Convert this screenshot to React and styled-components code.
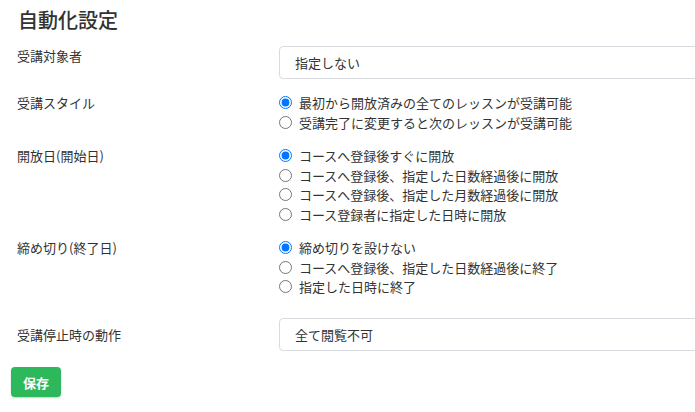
import React, { useState } from "react";
import styled, { createGlobalStyle } from "styled-components";

const GlobalStyle = createGlobalStyle`
  body {
    margin: 0;
    background: #ffffff;
    font-family: "Noto Sans CJK JP", "Noto Sans", sans-serif;
    color: #333333;
    overflow: hidden;
  }
`;

const Page = styled.div`
  box-sizing: border-box;
  width: 100vw;
  overflow: hidden;
  padding: 8px 0 16px 11px;
`;

const Title = styled.h2`
  margin: 0 0 14px 7px;
  font-size: 20px;
  line-height: 24px;
  font-weight: 500;
  color: #333333;
`;

const Form = styled.div`
  display: flex;
  flex-direction: column;
  gap: 14px;
`;

const Row = styled.div`
  display: grid;
  grid-template-columns: 268px 480px;
  align-items: ${({ $centered }) => ($centered ? "center" : "start")};
  margin-top: ${({ $extra }) => $extra || 0}px;
`;

const Label = styled.div`
  padding-left: 6px;
  font-size: 13px;
  line-height: 19.5px;
  color: #333333;
`;

const Select = styled.select`
  appearance: none;
  width: 100%;
  height: 33px;
  box-sizing: border-box;
  border: 1px solid #d8dbe0;
  border-radius: 4px;
  padding: 0 15px;
  font-family: inherit;
  font-size: 13px;
  color: #333333;
  background: #ffffff;
  outline: none;
`;

const RadioList = styled.div`
  display: flex;
  flex-direction: column;
`;

const RadioLabel = styled.label`
  display: flex;
  align-items: center;
  height: 19.5px;
  font-size: 13px;
  color: #333333;
  cursor: pointer;

  input {
    margin: 0 7px 0 0;
    width: 13px;
    height: 13px;
  }
`;

const SaveButton = styled.button`
  margin-top: 16px;
  height: 30px;
  padding: 0 12px;
  border: none;
  border-radius: 4px;
  background: #2eb85c;
  color: #ffffff;
  font-family: inherit;
  font-size: 13px;
  font-weight: 700;
  box-shadow: 0 1px 2px rgba(0, 0, 0, 0.2);
  cursor: pointer;
`;

const RadioGroup = ({ name, options, value, onChange }) => (
  <RadioList>
    {options.map((opt, i) => (
      <RadioLabel key={opt}>
        <input type="radio" name={name} checked={value === i} onChange={() => onChange(i)} />
        {opt}
      </RadioLabel>
    ))}
  </RadioList>
);

const App = () => {
  const [style, setStyle] = useState(0);
  const [openDay, setOpenDay] = useState(0);
  const [deadline, setDeadline] = useState(0);

  return (
    <Page>
      <GlobalStyle />
      <Title>自動化設定</Title>
      <Form>
        <Row>
          <Label>受講対象者</Label>
          <Select defaultValue="none">
            <option value="none">指定しない</option>
          </Select>
        </Row>
        <Row>
          <Label>受講スタイル</Label>
          <RadioGroup
            name="style"
            value={style}
            onChange={setStyle}
            options={["最初から開放済みの全てのレッスンが受講可能", "受講完了に変更すると次のレッスンが受講可能"]}
          />
        </Row>
        <Row>
          <Label>開放日(開始日)</Label>
          <RadioGroup
            name="open"
            value={openDay}
            onChange={setOpenDay}
            options={[
              "コースへ登録後すぐに開放",
              "コースへ登録後、指定した日数経過後に開放",
              "コースへ登録後、指定した月数経過後に開放",
              "コース登録者に指定した日時に開放",
            ]}
          />
        </Row>
        <Row>
          <Label>締め切り(終了日)</Label>
          <RadioGroup
            name="deadline"
            value={deadline}
            onChange={setDeadline}
            options={["締め切りを設けない", "コースへ登録後、指定した日数経過後に終了", "指定した日時に終了"]}
          />
        </Row>
        <Row $centered $extra={7.5}>
          <Label>受講停止時の動作</Label>
          <Select defaultValue="none">
            <option value="none">全て閲覧不可</option>
          </Select>
        </Row>
      </Form>
      <SaveButton>保存</SaveButton>
    </Page>
  );
};

export default App;
